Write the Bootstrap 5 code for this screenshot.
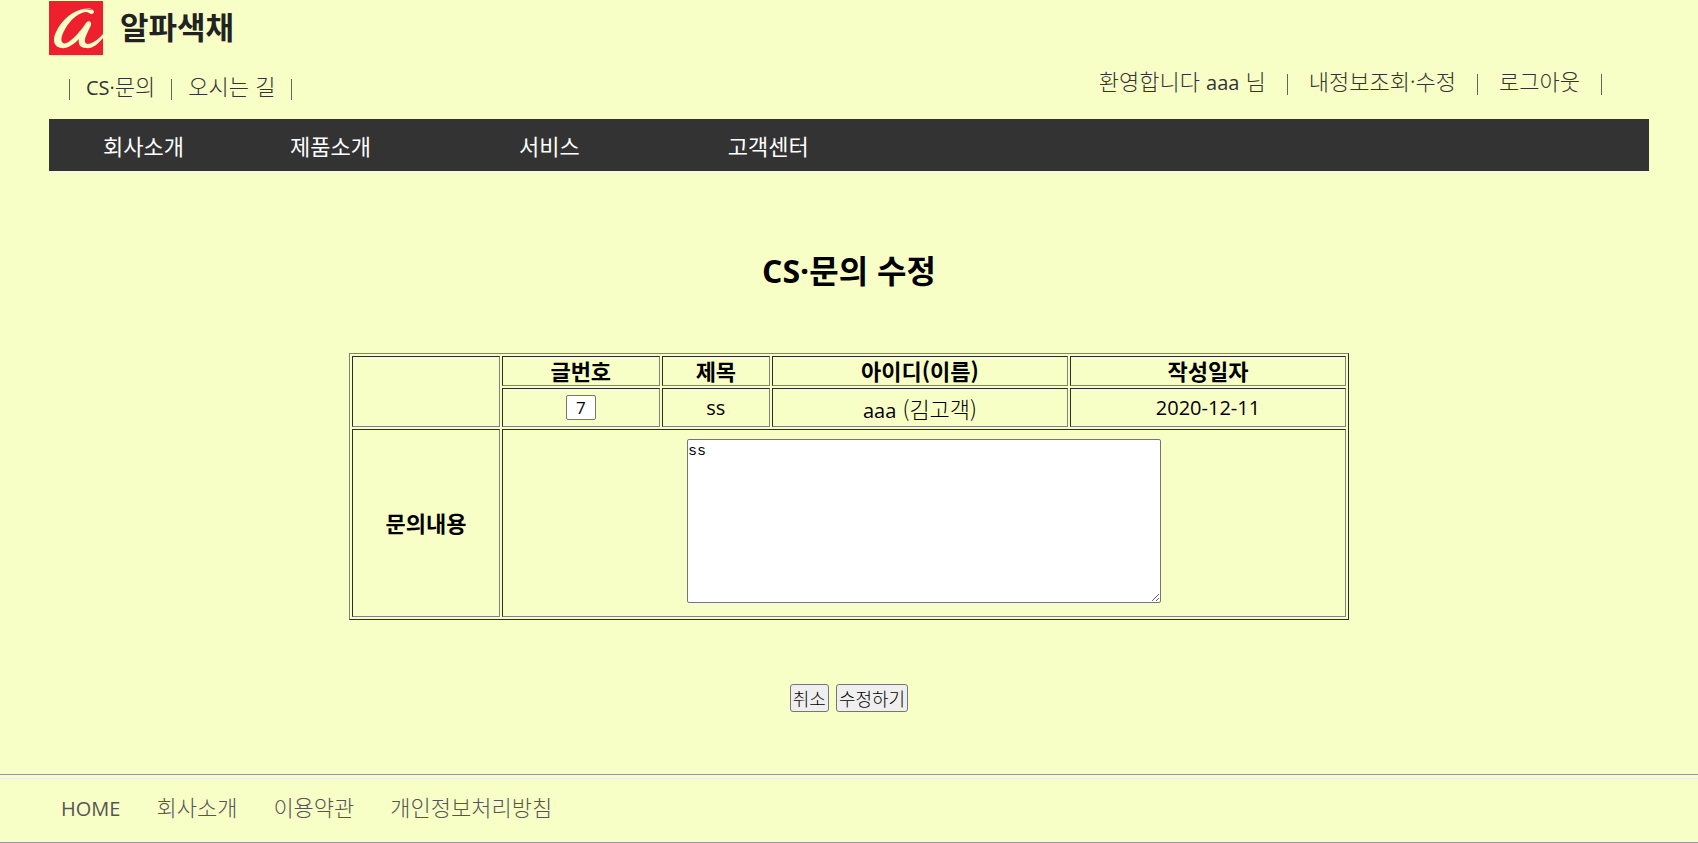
<!DOCTYPE html>
<html lang="ko">
<head>
<meta charset="utf-8">
<meta name="viewport" content="width=device-width, initial-scale=1">
<title>CS·문의 수정</title>
<link href="https://cdn.jsdelivr.net/npm/bootstrap@5.3.0/dist/css/bootstrap.min.css" rel="stylesheet">
<style>
body { background: #f8ffc6; color: #000; font: 300 22px/30px "Noto Sans CJK KR", sans-serif; }
a { color: inherit; text-decoration: none; }
.latin { font-family: "Open Sans", "Noto Sans CJK KR", sans-serif; font-size: 20px; line-height: 20px; font-weight: 400; }
.shell { max-width: 1600px; margin: 0 auto; }
.brand { gap: 17px; padding-top: 1px; font-size: 31px; font-weight: 700; color: #222; }
.brand span { padding-bottom: 4px; }
.brand svg { width: 54px; height: 54px; }
.links { color: #333; }
.links-left { gap: 16px; padding: 15px 0 0 20px; }
.links-right { gap: 21px; padding: 10px 47px 0 0; }
.bar { width: 1px; height: 21px; margin-top: 8px; background: #666655; }
.top-links { height: 64px; }
.main-nav { background: #333; color: #fff; padding: 11px 54px; column-gap: 148px; font-weight: 400; }
.main-nav li:first-child { margin-right: -42px; }
h1 { font-size: 32px; line-height: 40px; font-weight: 700; margin: 78px 0 64px; }
h1 .latin { font-size: 32px; font-weight: 700; }
.inquiry { max-width: 1000px; border: 1px solid; border-color: #808080 #2c2c2c #2c2c2c #808080; border-collapse: separate; border-spacing: 2px; table-layout: fixed; }
.inquiry th, .inquiry td { border: 1px solid; border-color: #2c2c2c #808080 #808080 #2c2c2c; padding: 0; text-align: center; vertical-align: middle; }
.inquiry th { font-weight: 700; font-size: 22px; line-height: 26px; padding-bottom: 2px; }
.inquiry td { height: 39px; }
.inquiry .message { height: 188px; }
.field { border: 1px solid #767676; border-radius: 2px; background: #fff; color: #000; }
.number { width: 30px; height: 25px; padding: 0; font: 400 17px/20px "Open Sans", sans-serif; text-align: center; }
textarea.field { width: 474px; max-width: 100%; height: 164px; padding: 3px 0; font: 15px/18px "Liberation Mono", monospace; }
.actions { gap: 7px; padding: 64px 0 62px; }
.actions button { border: 1px solid #767676; border-radius: 3px; background: #efefef; color: #000; padding: 0 2px; font-size: 18px; line-height: 26px; font-weight: 300; }
footer { border-top: 1px solid #999; border-bottom: 1px solid #999; color: #555; padding-top: 3px; }
.foot-links { border-top: 1px solid #eee; padding: 12px 61px 21px; column-gap: 36px; }
</style>
</head>
<body>
<header class="shell">
  <a href="#" class="brand d-flex align-items-center">
    <svg viewBox="0 0 54 54" aria-hidden="true"><path fill="#ee202d" d="M0 0h54v54H0z"/><path fill="#f8ffc6" d="M43 9C43 7 38 7 34 8C20 11 6 27 6 38C6 44 9 47 14 46C21 45 28 38 33 31C32 38 32 45 38 45C44 45 49 40 54 34V37C48 44 43 48 37 47C31 46 29 42 30 38C25 43 18 48 12 47C5 46 3 39 7 31C13 18 25 9 35 8C40 7 45 8 45 11C44 14 41 13 40 12C36 9 27 14 21 21C14 29 10 40 14 42C19 45 31 31 37 22C39 19 43 20 42 24C39 31 35 37 36 41C37 45 45 43 54 33V36C46 44 42 47 37 47C31 47 29 43 30 38C24 44 18 48 12 47C5 46 4 38 7 31C13 18 25 9 35 8Z"/></svg>
    <span>알파색채</span>
  </a>
  <div class="top-links d-flex justify-content-between align-items-start">
    <div class="links links-left d-flex align-items-center">
      <span class="bar"></span><a href="#"><span class="latin">CS·</span>문의</a><span class="bar"></span><a href="#">오시는 길</a><span class="bar"></span>
    </div>
    <div class="links links-right d-flex align-items-center">
      <span>환영합니다 <span class="latin">aaa</span> 님</span><span class="bar"></span><a href="#">내정보조회·수정</a><span class="bar"></span><a href="#">로그아웃</a><span class="bar"></span>
    </div>
  </div>
  <nav>
    <ul class="main-nav list-unstyled d-flex flex-wrap mb-0">
      <li><a href="#">회사소개</a></li>
      <li><a href="#">제품소개</a></li>
      <li><a href="#">서비스</a></li>
      <li><a href="#">고객센터</a></li>
    </ul>
  </nav>
</header>
<main>
  <h1 class="text-center"><span class="latin">CS·</span>문의 수정</h1>
  <form>
    <table class="inquiry w-100 mx-auto">
      <colgroup><col style="width:15%"><col style="width:16%"><col style="width:11%"><col style="width:30%"><col style="width:28%"></colgroup>
      <tr><td rowspan="2"></td><th scope="col" id="num">글번호</th><th scope="col">제목</th><th scope="col">아이디(이름)</th><th scope="col">작성일자</th></tr>
      <tr><td><input class="field number d-block mx-auto" type="text" value="7" aria-labelledby="num" readonly></td><td class="latin">ss</td><td><span class="latin">aaa</span> (김고객)</td><td class="latin">2020-12-11</td></tr>
      <tr><th scope="row"><label for="message">문의내용</label></th><td colspan="4" class="message"><textarea class="field" id="message">ss</textarea></td></tr>
    </table>
    <div class="actions d-flex justify-content-center">
      <button type="button">취소</button>
      <button type="submit">수정하기</button>
    </div>
  </form>
</main>
<footer>
  <div class="foot-links d-flex flex-wrap align-items-baseline">
    <a href="#" class="latin">HOME</a><a href="#">회사소개</a><a href="#">이용약관</a><a href="#">개인정보처리방침</a>
  </div>
</footer>
<script src="https://cdn.jsdelivr.net/npm/bootstrap@5.3.0/dist/js/bootstrap.bundle.min.js"></script>
</body>
</html>
